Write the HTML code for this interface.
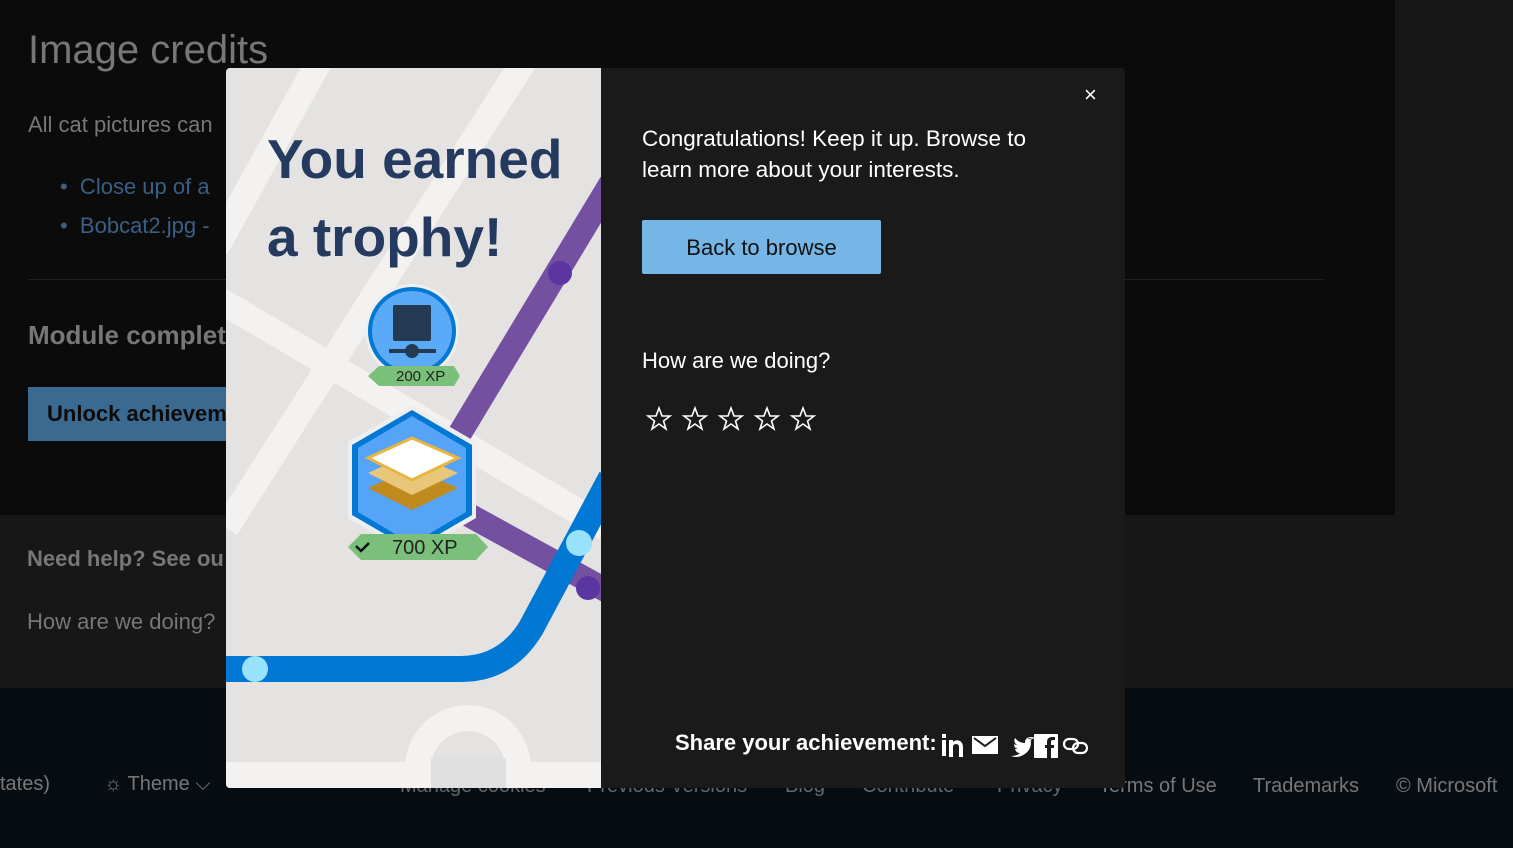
<!DOCTYPE html>
<html><head><meta charset="utf-8"><style>
*{margin:0;padding:0;box-sizing:border-box}
body{width:1513px;height:848px;overflow:hidden;background:#171717;font-family:"Liberation Sans",sans-serif;position:relative}
.a{position:absolute;white-space:nowrap}
.f{position:absolute;top:775px;font-size:20px;color:#666}
</style></head><body>
<div class="a" style="left:0;top:0;width:1395px;height:515px;background:#0b0b0b"></div>
<div class="a" style="left:0;top:688px;width:1513px;height:160px;background:#050d13"></div>
<div class="a" style="left:28px;top:28px;font-size:40px;color:#777">Image credits</div>
<div class="a" style="left:28px;top:112px;font-size:22px;color:#777">All cat pictures can</div>
<div class="a" style="left:60px;top:174px;font-size:22px;color:#3a5f84">•&nbsp; Close up of a</div>
<div class="a" style="left:60px;top:213px;font-size:22px;color:#3a5f84">•&nbsp; Bobcat2.jpg -</div>
<div class="a" style="left:28px;top:279px;width:1295px;height:1px;background:#222"></div>
<div class="a" style="left:28px;top:320px;font-size:26px;color:#777;font-weight:bold">Module complet</div>
<div class="a" style="left:28px;top:387px;width:210px;height:54px;background:#3b6a91;color:#0b0b0b;font-size:22px;font-weight:bold;padding:14px 19px">Unlock achievem</div>
<div class="a" style="left:27px;top:546px;font-size:22px;color:#777;font-weight:bold">Need help? See ou</div>
<div class="a" style="left:27px;top:609px;font-size:22px;color:#777">How are we doing?</div>
<div class="a" style="left:0;top:773px;font-size:20px;color:#777">tates)</div>
<div class="a" style="left:104px;top:773px;font-size:20px;color:#777">☼ Theme ⌵</div>
<div class="f" style="left:400px">Manage cookies</div>
<div class="f" style="left:587px">Previous Versions</div>
<div class="f" style="left:785px">Blog</div>
<div class="f" style="left:862px">Contribute</div>
<div class="f" style="left:997px">Privacy</div>
<div class="f" style="left:1099px;color:#777">Terms of Use</div>
<div class="f" style="left:1253px;color:#777">Trademarks</div>
<div class="f" style="left:1396px;color:#777">© Microsoft</div>

<div class="a" style="left:226px;top:68px;width:899px;height:720px;background:#1a1a1a;border-radius:4px;overflow:hidden">
<svg width="375" height="720" style="position:absolute;left:0;top:0">
<rect width="375" height="720" fill="#e4e3e2"/>
<g stroke="#f3f2f1" stroke-width="26" fill="none">
<line x1="95" y1="-10" x2="-10" y2="180"/>
<line x1="300" y1="-10" x2="0" y2="460"/>
<line x1="-10" y1="230" x2="380" y2="460"/>
<line x1="0" y1="707" x2="375" y2="707"/>
<path d="M192 720 V700 a50 50 0 0 1 100 0 V720" stroke-width="26"/>
</g>
<rect x="205" y="690" width="75" height="40" fill="#e0e0e0"/>
<g stroke="#7451a0" stroke-width="24" fill="none"><line x1="385" y1="115" x2="225" y2="380"/><line x1="230" y1="440" x2="385" y2="525"/></g>
<circle cx="334" cy="205" r="12" fill="#5b35a0"/>
<circle cx="362" cy="520" r="12" fill="#5b35a0"/>
<path d="M-5 601 H235 Q280 601 305 560 L385 410" stroke="#0078d4" stroke-width="26" fill="none"/>
<circle cx="353" cy="475" r="13" fill="#98e3fb"/>
<circle cx="29" cy="601" r="13" fill="#98e3fb"/>
<circle cx="186" cy="263" r="47" fill="#eee"/>
<circle cx="186" cy="263" r="44" fill="#0078d4"/>
<circle cx="186" cy="263" r="40" fill="#5aaaf7"/>
<rect x="167" y="237" width="38" height="36" fill="#243a52" rx="2"/>
<line x1="163" y1="283" x2="210" y2="283" stroke="#243a52" stroke-width="4"/>
<circle cx="186" cy="283" r="7" fill="#243a52"/>
<polygon points="142,308 153,298 228,298 234,308 228,318 153,318" fill="#7abf7a"/>
<text x="170" y="313" font-size="15" fill="#222" font-family="Liberation Sans">200 XP</text>
<polygon points="186,337 250,374 250,450 186,487 122,450 122,374" fill="#eee"/>
<polygon points="186,342 246,377 246,447 186,482 126,447 126,377" fill="#0078d4"/>
<polygon points="186,348 240,380 240,444 186,476 132,444 132,380" fill="#56a4f7"/>
<polygon points="186,400 232,420 186,442 142,420" fill="#c08b1e"/>
<polygon points="186,385 232,405 186,427 142,405" fill="#e8c77a"/>
<polygon points="186,370 232,390 186,412 142,390" fill="#fff" stroke="#e8b640" stroke-width="3"/>
<polygon points="122,479 135,466 250,466 262,479 250,492 135,492" fill="#7abf7a"/>
<path d="M130 478 l5 5 l8 -8" stroke="#111" stroke-width="2.5" fill="none"/>
<text x="166" y="486" font-size="20" fill="#222" font-family="Liberation Sans">700 XP</text>
</svg>
<div class="a" style="left:41px;top:52px;font-size:55px;line-height:78px;color:#243a5e;font-weight:bold;white-space:normal;width:330px">You earned a trophy!</div>
<div class="a" style="left:858px;top:14px;font-size:22px;color:#fff">×</div>
<div class="a" style="left:416px;top:55px;font-size:22.5px;line-height:31px;color:#fff;white-space:normal;width:440px">Congratulations! Keep it up. Browse to learn more about your interests.</div>
<div class="a" style="left:416px;top:152px;width:239px;height:54px;background:#75b6e7;border-radius:2px;color:#111;font-size:22px;text-align:center;line-height:56px">Back to browse</div>
<div class="a" style="left:416px;top:280px;font-size:22px;color:#fff">How are we doing?</div>
<svg class="a" style="left:420px;top:338px" width="180" height="26">
<g fill="none" stroke="#fff" stroke-width="1.6">
<path id="s" d="M13 2 L16 10 L24 10 L17.5 15 L20 23 L13 18 L6 23 L8.5 15 L2 10 L10 10 Z"/>
<use href="#s" x="36"/><use href="#s" x="72"/><use href="#s" x="108"/><use href="#s" x="144"/>
</g></svg>
<div class="a" style="left:449px;top:662px;font-size:22px;color:#fff;font-weight:bold">Share your achievement:</div>
<svg class="a" style="left:714px;top:662px" width="152" height="30">
<g fill="#fff">
<rect x="2" y="10" width="4" height="16"/><rect x="2" y="4" width="4" height="4"/>
<path d="M9 10 h4 v2 q3 -3 7 -1 q3 2 3 6 v10 h-4 v-10 q0 -3 -3 -3 q-3 0 -3 3 v10 h-4z"/>
<path d="M32 6 h26 v18 h-26z"/>
<path d="M65 8 q3 2 5 1 q-2 3 -1 3 q0 10 -10 14 q-5 2 -10 0 q6 0 9 -3 q-4 0 -5 -4 h3 q-4 -1 -4 -5 q1 1 3 1 q-4 -3 -2 -7 q4 5 10 5 q0 -6 6 -6 q3 0 4 2z" transform="translate(22,0)"/>
<rect x="94" y="4" width="24" height="24" rx="1"/>
</g>
<path d="M34 8 l11 8 l11 -8" stroke="#1a1a1a" stroke-width="2" fill="none"/>
<path d="M114 28 v-10 h3 v-3 h-3 v-3 q0 -2 2 -2 h2 v-3 h-3 q-5 0 -5 5 v3 h-2 v3 h2 v10z" fill="#1a1a1a" transform="translate(-3,0)"/>
<g fill="none" stroke="#fff" stroke-width="2.2"><rect x="124" y="9" width="14" height="10" rx="5"/><rect x="133" y="13" width="14" height="10" rx="5"/></g>
</svg>
</div>
</body></html>
